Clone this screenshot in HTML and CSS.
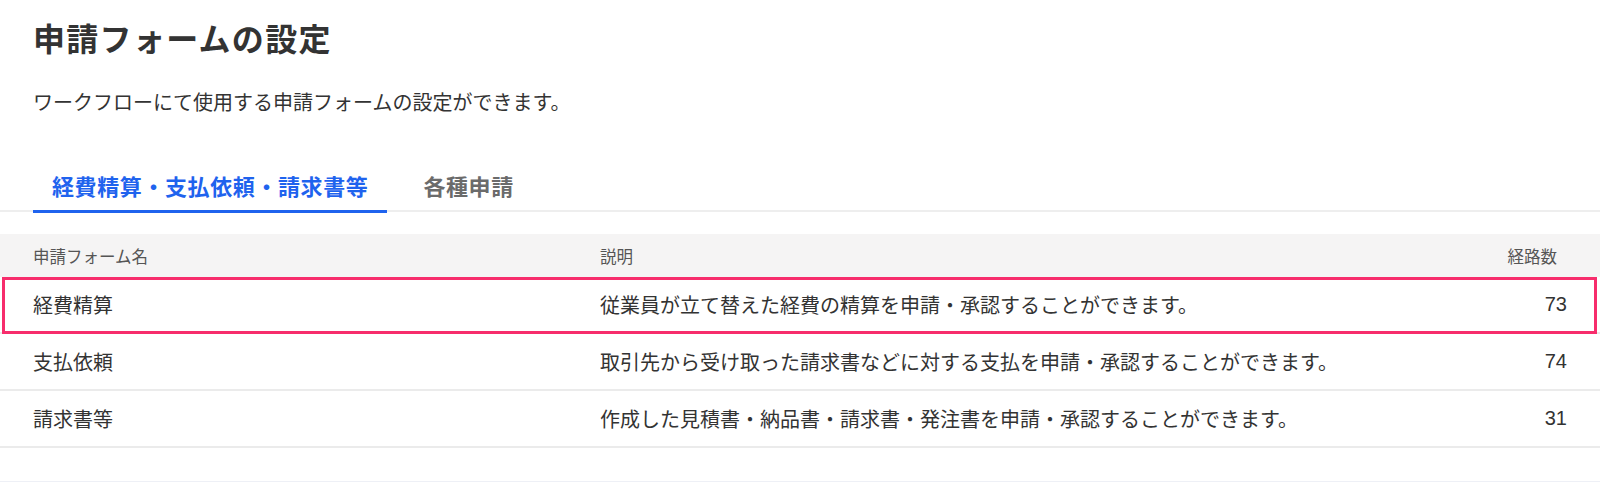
FILE: index.html
```html
<!DOCTYPE html>
<html lang="ja">
<head>
<meta charset="utf-8">
<title>申請フォームの設定</title>
<link rel="stylesheet" href="styles.css">
</head>
<body>
<main class="page">
  <h1 class="title">申請フォームの設定</h1>
  <p class="lead">ワークフローにて使用する申請フォームの設定ができます。</p>
  <nav class="tabs">
    <a class="tab tab-active">経費精算・支払依頼・請求書等</a>
    <a class="tab">各種申請</a>
  </nav>
  <div class="table">
    <div class="row row-head">
      <div class="cell cell-name">申請フォーム名</div>
      <div class="cell cell-desc">説明</div>
      <div class="cell cell-num">経路数</div>
    </div>
    <div class="row row-body row-highlight">
      <div class="cell cell-name">経費精算</div>
      <div class="cell cell-desc">従業員が立て替えた経費の精算を申請・承認することができます。</div>
      <div class="cell cell-num">73</div>
    </div>
    <div class="row row-body">
      <div class="cell cell-name">支払依頼</div>
      <div class="cell cell-desc">取引先から受け取った請求書などに対する支払を申請・承認することができます。</div>
      <div class="cell cell-num">74</div>
    </div>
    <div class="row row-body">
      <div class="cell cell-name">請求書等</div>
      <div class="cell cell-desc">作成した見積書・納品書・請求書・発注書を申請・承認することができます。</div>
      <div class="cell cell-num">31</div>
    </div>
  </div>
  <div class="footer-line"></div>
</main>
</body>
</html>
```

FILE: styles.css
```css
* { box-sizing: border-box; }

html, body {
  margin: 0;
  padding: 0;
  background: #ffffff;
}

body {
  font-family: "Noto Sans CJK JP", "Noto Sans", sans-serif;
  color: #333333;
  width: 1600px;
  height: 482px;
  overflow: hidden;
}

.page {
  display: flex;
  flex-direction: column;
}

.title {
  margin: 0;
  padding: 15px 0 0 33px;
  font-size: 32px;
  line-height: 44px;
  font-weight: 700;
  letter-spacing: 1.3px;
  color: #333333;
}

.lead {
  margin: 28px 0 0;
  padding-left: 33px;
  font-size: 20px;
  line-height: 30px;
  color: #333333;
}

.tabs {
  margin-top: 53px;
  display: flex;
  gap: 17px;
  padding-left: 33px;
  border-bottom: 2px solid #eeeeee;
  height: 42px;
}

.tab {
  display: block;
  padding: 0 19px 7px;
  font-size: 22px;
  line-height: 30px;
  font-weight: 700;
  letter-spacing: 0.6px;
  color: #6b6b6b;
  border-bottom: 3px solid transparent;
  height: 43px;
}

.tab-active {
  color: #1f63ee;
  border-bottom-color: #1f63ee;
}

.table {
  margin-top: 22px;
  display: flex;
  flex-direction: column;
}

.row {
  display: grid;
  grid-template-columns: 600px 1fr 200px;
  align-items: center;
  position: relative;
}

.row-head {
  height: 43px;
  background: #f5f4f4;
  font-size: 16.5px;
  color: #555555;
}

.row-body {
  height: 57px;
  border-bottom: 2px solid #ebebeb;
  font-size: 20px;
  color: #333333;
}

.row-highlight::after {
  content: "";
  position: absolute;
  left: 2px;
  right: 3px;
  top: 0;
  bottom: -2px;
  border: 3px solid #f72d6c;
  pointer-events: none;
}

.cell-name {
  padding-left: 33px;
}

.cell-num {
  text-align: right;
  padding-right: 33px;
  font-family: "Liberation Sans", "Noto Sans CJK JP", sans-serif;
}

.row-head .cell-num {
  padding-right: 43px;
  font-family: "Noto Sans CJK JP", sans-serif;
}

.footer-line {
  margin-top: 33px;
  border-top: 1px solid #eef0f6;
}
```
